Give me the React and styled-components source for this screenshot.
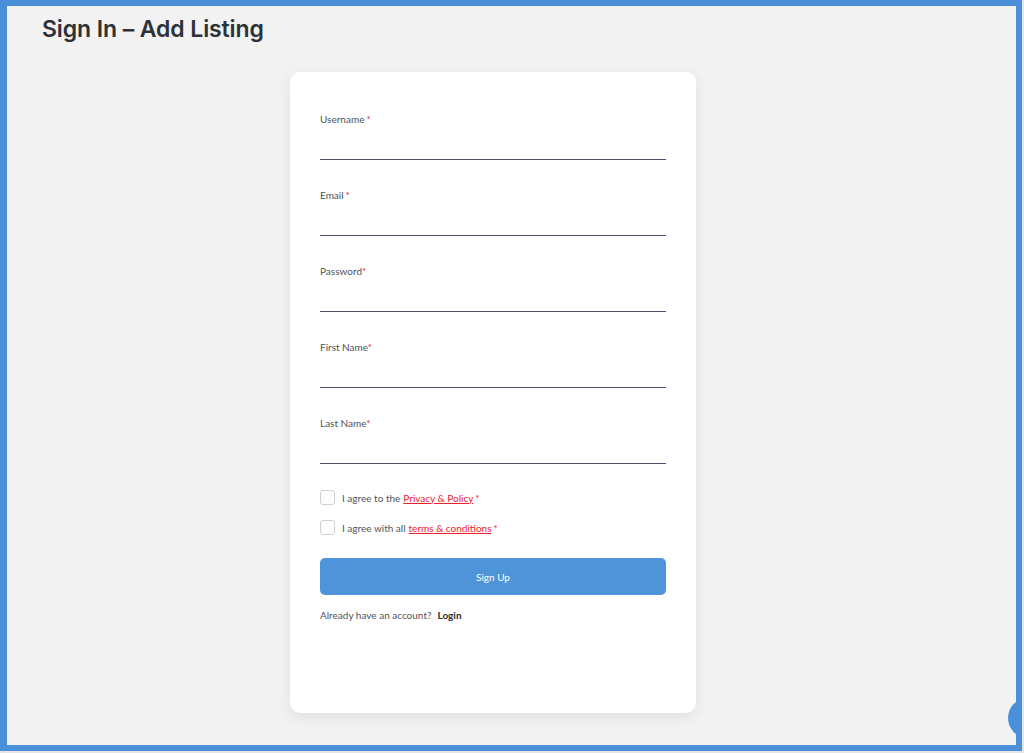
import React, { useState } from "react";
import styled, { createGlobalStyle } from "styled-components";

const GlobalStyle = createGlobalStyle`
  html, body {
    margin: 0;
    padding: 0;
    background: #e6e6e6;
  }
  * {
    box-sizing: border-box;
  }
`;

const Frame = styled.div`
  position: relative;
  width: 1022px;
  height: 751px;
  border: 6px solid #4a90d9;
  border-left-width: 7px;
  background: #f2f2f2;
  overflow: hidden;
`;

const Title = styled.h1`
  margin: 10px 0 0 35px;
  font-family: Inter, "Liberation Sans", sans-serif;
  font-size: 23px;
  line-height: 26px;
  font-weight: 600;
  color: #2d3138;
  letter-spacing: -0.1px;
`;

const Card = styled.form`
  margin: 30px 0 0 283px;
  width: 406px;
  height: 641px;
  padding: 40px 30px 0;
  background: #fff;
  border-radius: 10px;
  box-shadow: 0 4px 14px rgba(0, 0, 0, 0.08);
  font-family: Lato, "Open Sans", sans-serif;
  display: flex;
  flex-direction: column;
`;

const Field = styled.div`
  display: flex;
  flex-direction: column;
  margin-bottom: 28px;
`;

const Label = styled.label`
  font-size: 10px;
  line-height: 14px;
  color: #4f5358;
`;

const Star = styled.span`
  color: #e3262e;
  margin-left: ${(p) => (p.$spaced ? "2px" : "0")};
`;

const Input = styled.input`
  height: 34px;
  border: none;
  border-bottom: 1px solid #4f4f72;
  outline: none;
  font-family: inherit;
  font-size: 12px;
  background: transparent;
  padding: 0;
`;

const Checks = styled.div`
  display: flex;
  flex-direction: column;
  gap: 15px;
  margin-top: -2px;
`;

const CheckRow = styled.label`
  display: flex;
  align-items: center;
  gap: 7px;
  font-size: 10px;
  color: #4f5358;
  height: 15px;
`;

const Box = styled.span`
  width: 15px;
  height: 15px;
  border: 1px solid #d0d0d0;
  border-radius: 3px;
  background: ${(p) => (p.$on ? "#4f94d8" : "#fff")};
  flex-shrink: 0;
`;

const Link = styled.a`
  color: #e8212b;
  text-decoration: underline;
  margin-left: 3px;
`;

const Button = styled.button`
  margin-top: 23px;
  height: 37px;
  width: 100%;
  border: none;
  border-radius: 5px;
  background: #4f94d8;
  color: #fff;
  font-family: inherit;
  font-size: 10px;
  cursor: pointer;
`;

const Footer = styled.p`
  margin: 13px 0 0;
  font-size: 10px;
  line-height: 14px;
  color: #4f5358;
`;

const Login = styled.a`
  margin-left: 6px;
  color: #2d2d2d;
  font-weight: 700;
`;

const Bubble = styled.div`
  position: absolute;
  right: -32px;
  bottom: 7px;
  width: 40px;
  height: 40px;
  border-radius: 50%;
  background: #4a90d9;
`;

const fields = [
  { name: "Username", spaced: true },
  { name: "Email", spaced: true },
  { name: "Password" },
  { name: "First Name" },
  { name: "Last Name" },
];

export default function App() {
  const [agree, setAgree] = useState([false, false]);
  const toggle = (i) => setAgree(agree.map((v, j) => (j === i ? !v : v)));

  return (
    <>
      <GlobalStyle />
      <Frame>
        <Title>Sign In – Add Listing</Title>
        <Card onSubmit={(e) => e.preventDefault()}>
          {fields.map((f) => (
            <Field key={f.name}>
              <Label>
                {f.name}
                <Star $spaced={f.spaced}>*</Star>
              </Label>
              <Input type={f.name === "Password" ? "password" : "text"} />
            </Field>
          ))}
          <Checks>
            <CheckRow onClick={() => toggle(0)}>
              <Box $on={agree[0]} />
              <span>
                I agree to the<Link href="#">Privacy &amp; Policy</Link>
                <Star $spaced>*</Star>
              </span>
            </CheckRow>
            <CheckRow onClick={() => toggle(1)}>
              <Box $on={agree[1]} />
              <span>
                I agree with all<Link href="#">terms &amp; conditions</Link>
                <Star $spaced>*</Star>
              </span>
            </CheckRow>
          </Checks>
          <Button type="submit">Sign Up</Button>
          <Footer>
            Already have an account?<Login>Login</Login>
          </Footer>
        </Card>
        <Bubble />
      </Frame>
    </>
  );
}
